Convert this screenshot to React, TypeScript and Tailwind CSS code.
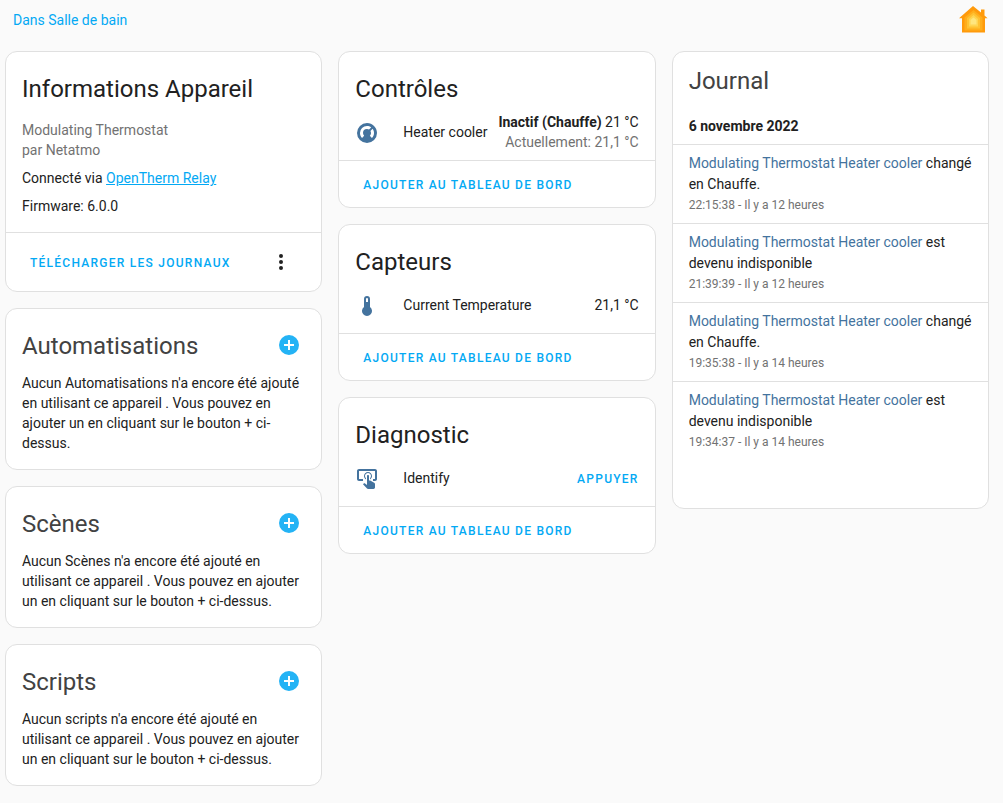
import React from 'react';

const icons = {
  thermostat:
    'M16.95,16.95L14.83,14.83C15.55,14.1 16,13.1 16,12C16,11.26 15.79,10.57 15.43,10L17.6,7.81C18.5,9 19,10.43 19,12C19,13.93 18.22,15.68 16.95,16.95M12,5C13.57,5 15,5.5 16.19,6.4L14,8.56C13.43,8.21 12.74,8 12,8A4,4 0 0,0 8,12C8,13.1 8.45,14.1 9.17,14.83L7.05,16.95C5.78,15.68 5,13.93 5,12A7,7 0 0,1 12,5M12,2A10,10 0 0,0 2,12A10,10 0 0,0 12,22A10,10 0 0,0 22,12C22,6.5 17.5,2 12,2Z',
  thermometer:
    'M15 13V5A3 3 0 0 0 9 5V13A5 5 0 1 0 15 13M12 4A1 1 0 0 1 13 5V8H11V5A1 1 0 0 1 12 4Z',
  tapButton:
    'M13 5C15.21 5 17 6.79 17 9C17 10.5 16.2 11.77 15 12.46V11.24C15.61 10.69 16 9.89 16 9C16 7.34 14.66 6 13 6S10 7.34 10 9C10 9.89 10.39 10.69 11 11.24V12.46C9.8 11.77 9 10.5 9 9C9 6.79 10.79 5 13 5M20 20.5C19.97 21.32 19.32 21.97 18.5 22H13C12.62 22 12.26 21.85 12 21.57L8 17.37L8.74 16.6C8.93 16.39 9.2 16.28 9.5 16.28H9.7L12 18V9C12 8.45 12.45 8 13 8S14 8.45 14 9V13.47L15.21 13.6L19.15 15.79C19.68 16.03 20 16.56 20 17.14V20.5M20 2H4C2.9 2 2 2.9 2 4V12C2 13.11 2.9 14 4 14H8V12L4 12L4 4H20L20 12H18V14H20V13.99L20.04 14C21.13 13.99 22 13.11 22 12V4C22 2.9 21.1 2 20 2Z',
  plusCircle:
    'M17,13H13V17H11V13H7V11H11V7H13V11H17M12,2A10,10 0 0,0 2,12A10,10 0 0,0 12,22A10,10 0 0,0 22,12A10,10 0 0,0 12,2Z',
  dots:
    'M12,16A2,2 0 0,1 14,18A2,2 0 0,1 12,20A2,2 0 0,1 10,18A2,2 0 0,1 12,16M12,10A2,2 0 0,1 14,12A2,2 0 0,1 12,14A2,2 0 0,1 10,12A2,2 0 0,1 12,10M12,4A2,2 0 0,1 14,6A2,2 0 0,1 12,8A2,2 0 0,1 10,6A2,2 0 0,1 12,4Z',
};

const emptySections = [
  { title: 'Automatisations', text: "Aucun Automatisations n'a encore été ajouté en utilisant ce appareil . Vous pouvez en ajouter un en cliquant sur le bouton + ci-dessus." },
  { title: 'Scènes', text: "Aucun Scènes n'a encore été ajouté en utilisant ce appareil . Vous pouvez en ajouter un en cliquant sur le bouton + ci-dessus." },
  { title: 'Scripts', text: "Aucun scripts n'a encore été ajouté en utilisant ce appareil . Vous pouvez en ajouter un en cliquant sur le bouton + ci-dessus." },
];

const logEntries = [
  { message: 'changé en Chauffe.', when: '22:15:38 - Il y a 12 heures' },
  { message: 'est devenu indisponible', when: '21:39:39 - Il y a 12 heures' },
  { message: 'changé en Chauffe.', when: '19:35:38 - Il y a 14 heures' },
  { message: 'est devenu indisponible', when: '19:34:37 - Il y a 14 heures' },
];

function Icon({ path }: { path: string }) {
  return (
    <svg viewBox="0 0 24 24" className="w-6 h-6 shrink-0" fill="currentColor" aria-hidden="true">
      <path d={path} />
    </svg>
  );
}

function HomeLogo() {
  return (
    <svg viewBox="0 0 30 28" className="w-[30px] h-7" aria-hidden="true">
      <path d="M14 0L22 6.6V3.4H25.5V9.6L28.6 12.3H26V26.6H3V12.3H0L14 0Z" fill="#ff9a0b" />
      <path d="M14.5 4L23.5 11.5V24.6H5.5V11.5Z" fill="#ffae1c" />
      <path d="M14.5 6.5L21 12V22.5H8V12Z" fill="#ffc233" />
      <path d="M14.5 9L19 13V20.5H10V13Z" fill="#ffd553" />
      <path d="M14.5 11.5L17.5 14V18.5H11.5V14Z" fill="#ffe67e" />
    </svg>
  );
}

function Card({ children }: { children: React.ReactNode }) {
  return <section className="bg-white border border-[#e0e0e0] rounded-xl">{children}</section>;
}

function TextButton({ children }: { children: React.ReactNode }) {
  return (
    <button className="h-9 px-2 pt-0.5 text-xs font-medium uppercase tracking-[1.25px] text-[#03a9f4]">
      {children}
    </button>
  );
}

function EntityCard({ title, icon, name, children }: {
  title: string;
  icon: string;
  name: string;
  children: React.ReactNode;
}) {
  return (
    <Card>
      <h1 className="px-4 pt-[14px] text-2xl leading-[46px]">{title}</h1>
      <div className="flex items-center px-4 pb-2">
        <span className="pt-0.5 text-[#44739e]">
          <Icon path={icon} />
        </span>
        <div className="flex-1 ml-6 whitespace-nowrap">{name}</div>
        <div className="flex flex-col justify-center h-10 text-right whitespace-nowrap">{children}</div>
      </div>
      <div className="flex items-center px-4 py-[5px] border-t border-[#e0e0e0]">
        <TextButton>Ajouter au tableau de bord</TextButton>
      </div>
    </Card>
  );
}

export default function App() {
  return (
    <div className="min-h-screen bg-[#fafafa] pl-[5px] pr-[14px] pb-4 font-['Roboto',sans-serif] text-sm text-[#212121]">
      <header className="flex items-start justify-between h-[51px] pl-2 pt-[6px]">
        <a href="#" className="leading-7 text-[#03a9f4]">Dans Salle de bain</a>
        <HomeLogo />
      </header>

      <main className="grid grid-cols-3 gap-4 items-start">
        <div className="flex flex-col gap-4">
          <Card>
            <div className="px-4 pt-[14px] pb-4">
              <h1 className="mb-2 text-2xl leading-[46px]">Informations Appareil</h1>
              <div className="text-[#727272]">Modulating Thermostat</div>
              <div className="text-[#727272]">par Netatmo</div>
              <div className="mt-2">
                Connecté via <a href="#" className="text-[#03a9f4] underline">OpenTherm Relay</a>
              </div>
              <div className="mt-2">Firmware: 6.0.0</div>
            </div>
            <div className="flex items-center justify-between px-4 py-[5px] border-t border-[#e0e0e0]">
              <TextButton>Télécharger les journaux</TextButton>
              <button aria-label="Menu" className="flex items-center justify-center w-12 h-12">
                <Icon path={icons.dots} />
              </button>
            </div>
          </Card>

          {emptySections.map((section) => (
            <Card key={section.title}>
              <div className="flex items-end justify-between pl-4 pr-2 pt-3">
                <h1 className="text-2xl leading-[46px] text-[#424242]">{section.title}</h1>
                <button aria-label="Ajouter" className="flex items-center justify-center w-12 h-12 text-[#24b3f5]">
                  <Icon path={icons.plusCircle} />
                </button>
              </div>
              <p className="px-4 pt-1 pb-4">{section.text}</p>
            </Card>
          ))}
        </div>

        <div className="flex flex-col gap-4">
          <EntityCard title="Contrôles" icon={icons.thermostat} name="Heater cooler">
            <div><b>Inactif (Chauffe)</b> 21 °C</div>
            <div className="text-[#727272]">Actuellement: 21,1 °C</div>
          </EntityCard>
          <EntityCard title="Capteurs" icon={icons.thermometer} name="Current Temperature">
            21,1 °C
          </EntityCard>
          <EntityCard title="Diagnostic" icon={icons.tapButton} name="Identify">
            <button className="h-9 pt-0.5 text-xs font-medium uppercase tracking-[1.25px] text-[#03a9f4]">Appuyer</button>
          </EntityCard>
        </div>

        <Card>
          <h1 className="px-4 pt-[14px] pb-1 text-2xl leading-[30px] text-[#424242]">Journal</h1>
          <div className="h-[400px] mb-2 overflow-hidden">
            <h4 className="px-4 pt-4 pb-2 font-bold">6 novembre 2022</h4>
            {logEntries.map((entry) => (
              <div key={entry.when} className="px-4 py-2 border-t border-[#e0e0e0]">
                <div className="leading-[21px]">
                  <a href="#" className="text-[#44739e]">Modulating Thermostat Heater cooler</a> {entry.message}
                </div>
                <div className="text-xs leading-5 text-[#727272]">{entry.when}</div>
              </div>
            ))}
          </div>
        </Card>
      </main>
    </div>
  );
}
